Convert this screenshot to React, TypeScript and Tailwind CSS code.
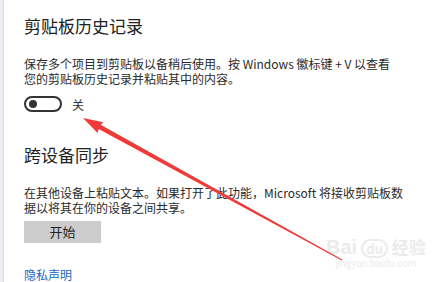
import React from "react"

const FONT = { fontFamily: '"Noto Sans CJK SC", "Noto Sans", sans-serif' }

function Toggle() {
  return (
    <div className="flex items-center gap-[10px]">
      <div className="flex h-[16px] w-[38px] items-center rounded-full border-2 border-[#333] px-[3px]">
        <div className="h-[8px] w-[8px] rounded-full bg-[#333]" />
      </div>
      <span className="text-[12px] leading-[15px] text-[#333]">关</span>
    </div>
  )
}

function Arrow() {
  return (
    <svg className="pointer-events-none absolute left-0 top-0" width="443" height="282" viewBox="0 0 443 282">
      <polygon points="83,118 103.4,122.3 99.5,126 97.6,132.9" fill="#f03a3a" />
      <polygon points="94,126.6 96.6,122.4 342.2,259.6 341.8,260.4" fill="#f03a3a" />
    </svg>
  )
}

function Watermark() {
  return (
    <div className="pointer-events-none absolute left-[326px] top-[236px] flex flex-col items-center text-[#ebebeb]">
      <div className="flex items-end gap-[4px]">
        <span className="text-[20px] font-bold leading-[22px]" style={{ fontFamily: '"Liberation Sans", sans-serif' }}>
          Bai
        </span>
        <span className="rounded-full border-2 border-[#ebebeb] px-[3px] text-[13px] font-bold leading-[15px]">du</span>
        <span className="text-[17px] font-bold leading-[22px]">经验</span>
      </div>
      <span className="text-[10px] leading-[12px]" style={{ fontFamily: '"Liberation Sans", sans-serif' }}>
        jingyan.baidu.com
      </span>
    </div>
  )
}

export default function App() {
  return (
    <div className="relative flex h-[282px] w-[443px] overflow-hidden bg-white" style={FONT}>
      <div className="w-[4px] shrink-0 border-r border-[#d8d8e0] bg-[#eceef4]" />
      <div className="flex flex-col pl-[20px] pt-[14px]">
        <h1 className="text-[17px] leading-[24px] text-[#222]">剪贴板历史记录</h1>
        <p className="mt-[18px] text-[12px] leading-[15px] text-[#2a2a2a]">
          保存多个项目到剪贴板以备稍后使用。按 Windows 徽标键 + V 以查看
          <br />
          您的剪贴板历史记录并粘贴其中的内容。
        </p>
        <div className="mt-[10px]">
          <Toggle />
        </div>

        <h2 className="mt-[31px] text-[17px] leading-[24px] text-[#222]">跨设备同步</h2>
        <p className="mt-[18px] text-[12px] leading-[15px] text-[#2a2a2a]">
          在其他设备上粘贴文本。如果打开了此功能，Microsoft 将接收剪贴板数
          <br />
          据以将其在你的设备之间共享。
        </p>
        <button
          type="button"
          className="mt-[6px] flex h-[25px] w-[77px] items-center justify-center bg-[#cccccc] text-[13px] text-[#222]"
        >
          开始
        </button>
        <a className="mt-[24px] text-[12px] leading-[15px] text-[#1a66c8]">隐私声明</a>
      </div>
      <Watermark />
      <Arrow />
    </div>
  )
}
